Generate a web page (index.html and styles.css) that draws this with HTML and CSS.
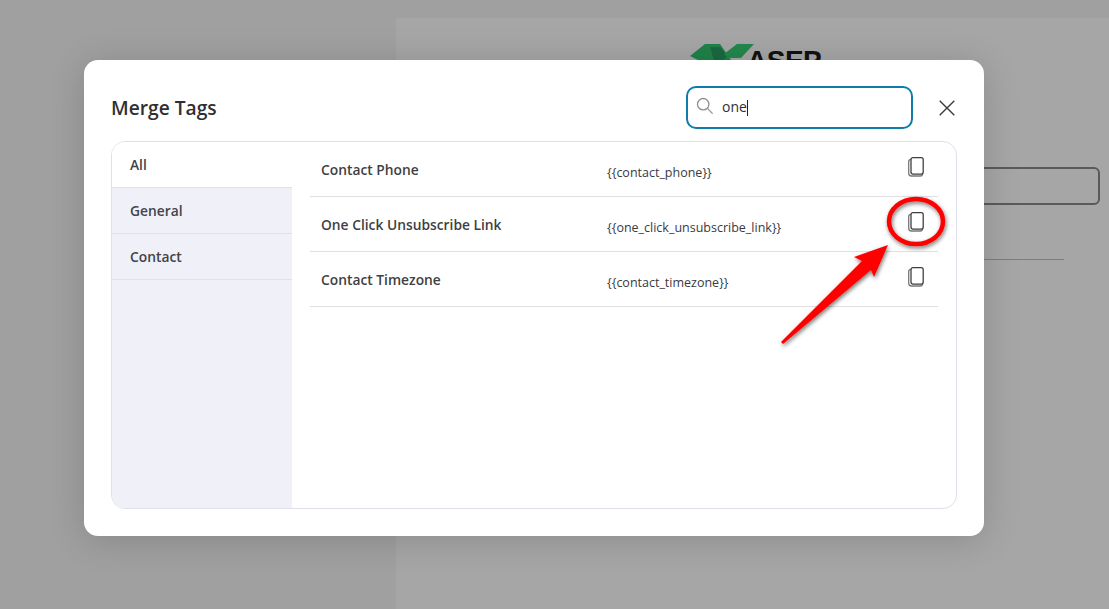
FILE: index.html
```html
<!DOCTYPE html>
<html lang="en">
<head>
<meta charset="utf-8">
<title>Merge Tags</title>
<link rel="stylesheet" href="styles.css">
</head>
<body>
<div class="backdrop">
  <aside class="bg-side"></aside>
  <section class="bg-canvas">
    <div class="bg-logo">
      <svg class="bg-logo-mark" width="64" height="18" viewBox="0 0 64 18"><path fill="#1f8248" d="M0 12 15 0h15l11 16H8z"/><path fill="#1a6a40" d="M20 3h10l8 9-5 4H24z"/><path fill="#23874d" d="M47 0h17L51 14H38l-4-4z"/></svg>
      <span class="bg-logo-text">ASEP</span>
    </div>
    <div class="bg-input"></div>
    <div class="bg-rule"></div>
  </section>
</div>

<div class="modal">
  <header class="modal-head">
    <h2 class="modal-title">Merge Tags</h2>
    <div class="search">
      <svg class="search-icon" width="18" height="18" viewBox="0 0 18 18" fill="none" stroke="#8f8f96" stroke-width="1.3"><circle cx="7.2" cy="7.2" r="5.7"/><path d="M11.4 11.4 16.6 16.6"/></svg>
      <span class="search-value">one</span><span class="caret"></span>
    </div>
    <svg class="close" width="16" height="16" viewBox="0 0 16 16" fill="none" stroke="#3c3c3c" stroke-width="1.4"><path d="M.7.7 15.3 15.3M15.3.7.7 15.3"/></svg>
  </header>

  <div class="panel">
    <nav class="tabs">
      <div class="tab tab-active">All</div>
      <div class="tab">General</div>
      <div class="tab">Contact</div>
    </nav>
    <div class="rows">
      <div class="row">
        <span class="row-name">Contact Phone</span>
        <span class="row-code">{{contact_phone}}</span>
        <svg class="copy" width="16" height="20" viewBox="0 0 16 20" fill="none" stroke-width="1.3"><path stroke="#77777c" d="M2.8 2.4A2 2 0 0 0 .7 4.4v11.8a2.8 2.8 0 0 0 2.8 2.8h8.6a2.6 2.6 0 0 0 2.6-2"/><rect stroke="#3f3f42" x="3" y=".7" width="12.2" height="16.4" rx="2"/></svg>
      </div>
      <div class="row">
        <span class="row-name">One Click Unsubscribe Link</span>
        <span class="row-code">{{one_click_unsubscribe_link}}</span>
        <svg class="copy" width="16" height="20" viewBox="0 0 16 20" fill="none" stroke-width="1.3"><path stroke="#77777c" d="M2.8 2.4A2 2 0 0 0 .7 4.4v11.8a2.8 2.8 0 0 0 2.8 2.8h8.6a2.6 2.6 0 0 0 2.6-2"/><rect stroke="#3f3f42" x="3" y=".7" width="12.2" height="16.4" rx="2"/></svg>
      </div>
      <div class="row">
        <span class="row-name">Contact Timezone</span>
        <span class="row-code">{{contact_timezone}}</span>
        <svg class="copy" width="16" height="20" viewBox="0 0 16 20" fill="none" stroke-width="1.3"><path stroke="#77777c" d="M2.8 2.4A2 2 0 0 0 .7 4.4v11.8a2.8 2.8 0 0 0 2.8 2.8h8.6a2.6 2.6 0 0 0 2.6-2"/><rect stroke="#3f3f42" x="3" y=".7" width="12.2" height="16.4" rx="2"/></svg>
      </div>
    </div>
  </div>
</div>

<svg class="annotation" width="1109" height="609" viewBox="0 0 1109 609" fill="none">
  <defs>
    <filter id="soft" x="-20%" y="-20%" width="140%" height="140%"><feDropShadow dx="1" dy="2" stdDeviation="2" flood-color="#000" flood-opacity=".55"/></filter>
  </defs>
  <ellipse cx="916" cy="221.5" rx="27" ry="22.5" stroke="#f00" stroke-width="4.5" filter="url(#soft)"/>
  <path d="M781 342 862 261 854 257 888 245 874 277 871 270 783 344Z" fill="#f00" filter="url(#soft)"/>
</svg>
</body>
</html>
```

FILE: styles.css
```css
* { box-sizing: border-box; }
html, body { margin: 0; padding: 0; height: 100%; overflow: hidden; }
body {
  position: relative;
  width: 1109px;
  height: 609px;
  background: #a0a0a0;
  font-family: "Open Sans", "Noto Sans", sans-serif;
  color: #303133;
}

/* dimmed page behind the dialog */
.backdrop {
  display: flex;
  height: 609px;
  padding-top: 18px;
}
.bg-side { width: 396px; flex: none; }
.bg-canvas { flex: 1; background: #a6a6a6; position: relative; }
.bg-logo {
  position: absolute;
  left: 294px;
  top: 26px;
  display: flex;
  align-items: flex-start;
}
.bg-logo-mark { flex: none; }
.bg-logo-text {
  font-family: "Liberation Sans", sans-serif;
  font-weight: 700;
  font-size: 28px;
  line-height: 30px;
  margin: 2px 0 0 -7px;
  letter-spacing: -.5px;
  color: #111;
}
.bg-input {
  position: absolute;
  left: 500px;
  top: 149px;
  width: 204px;
  height: 38px;
  border: 2px solid #5a5a5e;
  border-radius: 6px;
}
.bg-rule {
  position: absolute;
  left: 500px;
  top: 241px;
  width: 168px;
  height: 1px;
  background: #7d7d7d;
}

/* dialog */
.modal {
  position: absolute;
  left: 84px;
  top: 60px;
  width: 900px;
  height: 476px;
  background: #fff;
  border-radius: 14px;
  padding: 26px 27px 27px 27px;
  display: flex;
  flex-direction: column;
  box-shadow: 0 4px 36px rgba(0, 0, 0, .16);
}
.modal-head {
  display: flex;
  align-items: center;
  height: 43px;
  margin-bottom: 12px;
}
.modal-title {
  margin: 0;
  flex: 1;
  font-size: 19.2px;
  font-weight: 600;
  line-height: 43px;
  color: #2f2f33;
}
.search {
  width: 227px;
  height: 43px;
  border: 2px solid #0f7cab;
  border-radius: 10px;
  display: flex;
  align-items: center;
  padding-left: 8px;
}
.search-icon { flex: none; margin: -3px 8px 0 0; }
.search-value { font-size: 14px; color: #303133; margin-top: -2px; }
.caret { width: 1px; height: 16px; background: #222; }
.close { flex: none; margin-left: 26px; margin-right: 2px; }

.panel {
  flex: 1;
  display: flex;
  border: 1px solid #e0e0ec;
  border-radius: 14px;
  overflow: hidden;
}
.tabs {
  width: 180px;
  flex: none;
  background: #f0f0f9;
}
.tab {
  height: 46px;
  padding: 0 18px;
  display: flex;
  align-items: center;
  font-size: 13.8px;
  font-weight: 600;
  color: #434348;
  border-bottom: 1px solid #e0e0ea;
}
.tab-active { background: #fff; }

.rows { flex: 1; padding: 0 18px; }
.row {
  height: 55px;
  display: flex;
  align-items: center;
  border-bottom: 1px solid #e0e0e2;
}
.row-name {
  width: 297px;
  padding-left: 11px;
  flex: none;
  font-size: 13.8px;
  font-weight: 600;
  color: #3f3f44;
  margin-top: 1px;
}
.row-code {
  flex: 1;
  font-size: 12.5px;
  color: #3a3a3e;
  margin-top: 6px;
}
.copy { flex: none; margin: -4px 14px 0 0; }

.annotation {
  position: absolute;
  left: 0;
  top: 0;
  pointer-events: none;
}
```
